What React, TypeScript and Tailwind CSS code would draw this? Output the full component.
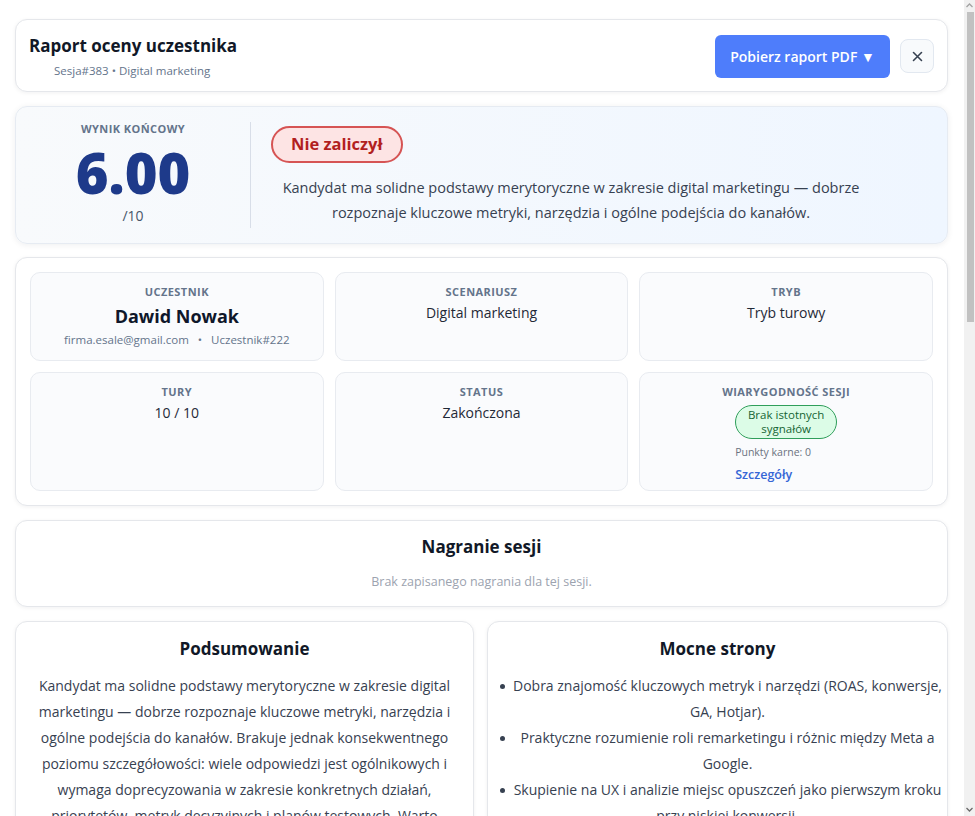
import React from "react";

const card = "rounded-[12px] border border-[#e5e7eb] bg-white shadow-[0_1px_4px_rgba(15,23,42,0.06)]";
const cell = "rounded-[10px] border border-[#e8ebf0] bg-[#fafbfd] pt-[12px] text-center";
const label = "text-[11px] leading-[14px] font-bold tracking-[0.04em] text-[#64748b] uppercase";

const strengths = [
  "Dobra znajomość kluczowych metryk i narzędzi (ROAS, konwersje, GA, Hotjar).",
  "Praktyczne rozumienie roli remarketingu i różnic między Meta a Google.",
  "Skupienie na UX i analizie miejsc opuszczeń jako pierwszym kroku przy niskiej konwersji.",
  "Świadomość znaczenia testów A/B i segmentacji odbiorców.",
];

export default function App() {
  return (
    <div className="flex h-[816px] w-[975px] overflow-hidden bg-white font-['Open_Sans',sans-serif] text-[#111827]">
      <div className="flex flex-1 flex-col pl-[15px] pr-[16px] pt-[19px]">
        {/* Header */}
        <div className={`${card} flex items-center justify-between pb-[12px] pl-[13px] pr-[13px] pt-[13px]`}>
          <div className="flex flex-col">
            <div className="text-[17px] font-bold leading-[26px] text-[#111827]">Raport oceny uczestnika</div>
            <div className="mt-[4px] pl-[25px] text-[11.5px] leading-[16px] text-[#64748b]">Sesja#383 • Digital marketing</div>
          </div>
          <div className="flex items-center gap-[10px]">
            <button className="h-[43px] w-[175px] rounded-[6px] bg-[#4e7dfb] text-[14px] font-semibold text-white">
              Pobierz raport PDF ▼
            </button>
            <button className="flex h-[34px] w-[34px] items-center justify-center rounded-[8px] border border-[#e2e8f0] bg-[#f8fafc] text-[#374151]">
              <svg width="11" height="11" viewBox="0 0 11 11" stroke="currentColor" strokeWidth="1.6" strokeLinecap="round">
                <path d="M1.5 1.5 L9.5 9.5 M9.5 1.5 L1.5 9.5" />
              </svg>
            </button>
          </div>
        </div>

        {/* Score */}
        <div className="mt-[14px] flex rounded-[12px] border border-[#e6ebf2] bg-gradient-to-r from-[#f8fafc] to-[#eff6ff] px-[16px] py-[15px] shadow-[0_1px_6px_rgba(15,23,42,0.07)]">
          <div className="flex w-[202px] flex-col items-center pb-[2px]">
            <div className={label}>Wynik końcowy</div>
            <div className="mt-[8px] text-[56px] font-extrabold leading-[56px] text-[#1e3a8a]">6.00</div>
            <div className="mt-[6px] text-[14px] leading-[20px] text-[#475569]">/10</div>
          </div>
          <div className="mx-[16px] w-px bg-[#d8dee8]" />
          <div className="ml-[4px] flex flex-col items-start pt-[4px]">
            <div className="flex h-[37px] items-center rounded-full border-2 border-[#d65454] bg-[#fde4e4] px-[18px] text-[16.5px] font-bold text-[#b21f1f]">
              Nie zaliczył
            </div>
            <p className="mt-[12px] w-[600px] text-center text-[14.5px] leading-[25px] text-[#374151]">
              Kandydat ma solidne podstawy merytoryczne w zakresie digital marketingu — dobrze rozpoznaje kluczowe metryki, narzędzia i ogólne podejścia do kanałów.
            </p>
          </div>
        </div>

        {/* Info grid */}
        <div className={`${card} mt-[13px] grid grid-cols-3 gap-[11px] p-[14px]`}>
          <div className={`${cell} pb-[12px]`}>
            <div className={label}>Uczestnik</div>
            <div className="mt-[5px] text-[18px] font-bold leading-[24px] text-[#0f172a]">Dawid Nowak</div>
            <div className="mt-[4px] text-[11.5px] leading-[16px] text-[#64748b]">
              firma.esale@gmail.com <span className="mx-[6px]">•</span> Uczestnik#222
            </div>
          </div>
          <div className={cell}>
            <div className={label}>Scenariusz</div>
            <div className="mt-[4px] text-[14px] leading-[20px] text-[#1f2937]">Digital marketing</div>
          </div>
          <div className={cell}>
            <div className={label}>Tryb</div>
            <div className="mt-[4px] text-[14px] leading-[20px] text-[#1f2937]">Tryb turowy</div>
          </div>
          <div className={cell}>
            <div className={label}>Tury</div>
            <div className="mt-[4px] text-[14px] leading-[20px] text-[#1f2937]">10 / 10</div>
          </div>
          <div className={cell}>
            <div className={label}>Status</div>
            <div className="mt-[4px] text-[14px] leading-[20px] text-[#1f2937]">Zakończona</div>
          </div>
          <div className={`${cell} flex flex-col items-center pb-[6px]`}>
            <div className={label}>Wiarygodność sesji</div>
            <div className="mt-[6px] flex w-[102px] flex-col items-start">
              <div className="w-[102px] rounded-full border border-[#2f9e5a] bg-[#dcfce7] py-[2px] text-center text-[11.5px] leading-[14px] text-[#166534]">
                Brak istotnych sygnałów
              </div>
              <div className="mt-[6px] text-[10.5px] leading-[14px] text-[#6b7280]">Punkty karne: 0</div>
              <div className="mt-[7px] text-[12.5px] font-semibold leading-[18px] text-[#3566d6]">Szczegóły</div>
            </div>
          </div>
        </div>

        {/* Nagranie */}
        <div className={`${card} mt-[14px] flex flex-col items-center pb-[15px] pt-[14px]`}>
          <div className="text-[17px] font-bold leading-[24px] text-[#111827]">Nagranie sesji</div>
          <div className="mt-[14px] text-[12.5px] leading-[18px] text-[#9ca3af]">Brak zapisanego nagrania dla tej sesji.</div>
        </div>

        {/* Bottom cards */}
        <div className="mt-[14px] grid grid-cols-[459px_461px] gap-[13px]">
          <div className={`${card} px-[14px] pt-[15px]`}>
            <div className="text-center text-[17px] font-bold leading-[24px] text-[#111827]">Podsumowanie</div>
            <p className="mt-[12px] text-center text-[14px] leading-[26px] text-[#374151]">
              Kandydat ma solidne podstawy merytoryczne w zakresie digital marketingu — dobrze rozpoznaje kluczowe metryki, narzędzia i ogólne podejścia do kanałów. Brakuje jednak konsekwentnego poziomu szczegółowości: wiele odpowiedzi jest ogólnikowych i wymaga doprecyzowania w zakresie konkretnych działań, priorytetów, metryk decyzyjnych i planów testowych. Warto rozwinąć umiejętność przekładania danych na konkretne decyzje optymalizacyjne.
            </p>
          </div>
          <div className={`${card} px-[4px] pt-[15px]`}>
            <div className="text-center text-[17px] font-bold leading-[24px] text-[#111827]">Mocne strony</div>
            <ul className="mt-[12px] flex flex-col text-[14px] leading-[26px] text-[#374151]">
              {strengths.map((s) => (
                <li key={s} className="flex">
                  <div className="flex w-[20px] shrink-0 justify-center pt-[11px]">
                    <div className="h-[5px] w-[5px] rounded-full bg-[#374151]" />
                  </div>
                  <div className="flex-1 text-center">{s}</div>
                </li>
              ))}
            </ul>
          </div>
        </div>
      </div>

      {/* Fake scrollbar */}
      <div className="flex w-[11px] flex-col bg-[#f1f1f1]">
        <div className="flex h-[11px] items-center justify-center">
          <svg width="7" height="5" viewBox="0 0 7 5"><path d="M0.5 4 L3.5 1 L6.5 4" fill="none" stroke="#a3a3a3" strokeWidth="1.3" /></svg>
        </div>
        <div className="ml-[3px] mr-[1px] mt-[1px] h-[310px] bg-[#c1c1c1]" />
        <div className="flex-1" />
        <div className="flex h-[14px] items-center justify-center">
          <svg width="7" height="5" viewBox="0 0 7 5"><path d="M0.5 1 L3.5 4 L6.5 1" fill="none" stroke="#6b6b6b" strokeWidth="1.3" /></svg>
        </div>
      </div>
    </div>
  );
}
